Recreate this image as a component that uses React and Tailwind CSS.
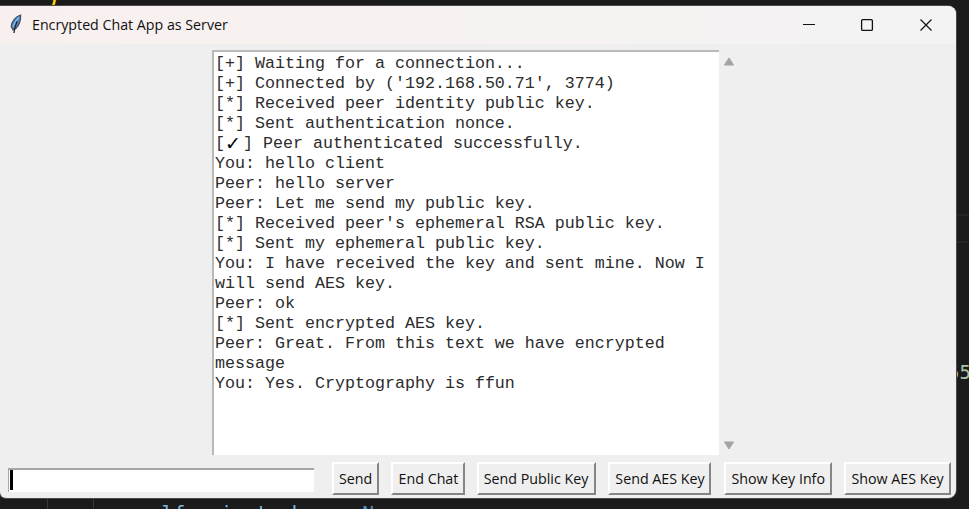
import React from 'react';

const LOG = [
  '[+] Waiting for a connection...',
  "[+] Connected by ('192.168.50.71', 3774)",
  '[*] Received peer identity public key.',
  '[*] Sent authentication nonce.',
  '[✓] Peer authenticated successfully.',
  'You: hello client',
  'Peer: hello server',
  'Peer: Let me send my public key.',
  "[*] Received peer's ephemeral RSA public key.",
  '[*] Sent my ephemeral public key.',
  'You: I have received the key and sent mine. Now I',
  'will send AES key.',
  'Peer: ok',
  '[*] Sent encrypted AES key.',
  'Peer: Great. From this text we have encrypted',
  'message',
  'You: Yes. Cryptography is ffun',
];

const BUTTONS = [
  ['Send', 'w-[47px]'],
  ['End Chat', 'w-[74px] ml-3'],
  ['Send Public Key', 'w-[119px] ml-3'],
  ['Send AES Key', 'w-[103px] ml-3'],
  ['Show Key Info', 'w-[108px] ml-[13px]'],
  ['Show AES Key', 'w-[107px] ml-3'],
];

function LogLine({ text }) {
  const parts = text.split('✓');
  return (
    <div className="flex h-5 whitespace-pre">
      <span>{parts[0]}</span>
      {parts.length > 1 && (
        <span className="w-[18px] font-['DejaVu_Sans'] text-[19px] font-bold leading-[18px] text-black">✓</span>
      )}
      {parts.length > 1 && <span>{parts[1]}</span>}
    </div>
  );
}

export default function App() {
  return (
    <div className="relative h-[509px] w-[969px] overflow-hidden bg-[#1b1b1b]">
      <div className="absolute left-[48px] top-[-12px] font-['Liberation_Mono',monospace] text-[18px] font-bold leading-5 text-[#ffd700]">)</div>
      <div className="absolute left-[956px] top-[214px] h-[29px] w-[13px] border-y-2 border-[#252525]" />
      <div className="absolute left-[948px] top-[362px] font-['DejaVu_Sans_Mono',monospace] text-[19px] leading-5 text-[#a9c5a0]">55</div>
      <div className="absolute left-[47px] top-[498px] h-[11px] w-[47px] border-x border-[#383838]" />
      <div className="absolute left-[138px] top-[504px] whitespace-pre font-['DejaVu_Sans_Mono',monospace] text-[19.600px] leading-5 text-[#79b8e0]">
        self.private_key = <span className="text-[#4a8cc4]">None</span>
      </div>

      <div className="relative mt-[6px] flex h-[492px] w-[956px] flex-col overflow-hidden rounded-r-lg rounded-bl-md bg-[#efefef] shadow-[0_0_0_1px_#4a4a4a]">
        <header className="flex h-[38px] shrink-0 items-center bg-linear-to-r from-[#f8f0ef] via-[#f6f2f1] to-[#f3f3f3]">
          <svg className="mb-[2px] ml-2 h-5 w-4 shrink-0" viewBox="0 0 16 20">
            <path d="M12.600 1C7.600 2.200 3.200 8 3.200 12.600L5 16l2.600-1.200C11 11.500 13 6.500 12.600 1Z" fill="#4a86c8" stroke="#46505c" strokeWidth="1.200" />
            <path d="M11 3.500C8 6 6.500 9 5.200 13" fill="none" stroke="#86b6ea" strokeWidth="1.400" />
            <path d="M9 7.500C7.500 11 6.200 14.500 6 19" fill="none" stroke="#222" strokeWidth="1.300" />
          </svg>
          <h1 className="mb-[2px] ml-2 w-[720px] whitespace-nowrap font-['Open_Sans',sans-serif] text-[15px] leading-5 text-[#111]">
            <span className="inline-block origin-left scale-x-[0.948]">Encrypted Chat App as Server</span>
          </h1>
          <svg className="ml-[51px] h-[14px] w-[130px] shrink-0" viewBox="0 0 130 14" fill="none" stroke="#111" strokeWidth="1.200">
            <path d="M0 6.500h12" />
            <rect x="58.600" y="1.600" width="10.800" height="10.800" rx="1.200" strokeWidth="1.300" />
            <path d="M117.500 1.500l11 11M128.500 1.500l-11 11" />
          </svg>
        </header>

        <main className="flex h-[413px] shrink-0 pl-[212px] pt-[6px]">
          <div className="h-[405px] w-[507px] border-l-2 border-t-2 border-[#b9b9b9] bg-white pl-px pt-[2px] font-['Liberation_Mono','DejaVu_Sans',monospace] text-[16.660px] leading-5 text-[#2c2c2c]">
            {LOG.map((line) => (
              <LogLine key={line} text={line} />
            ))}
          </div>
          <div className="ml-1 flex h-[405px] w-3 flex-col justify-between pb-[5px] pt-[7px]">
            <svg className="h-[9px] w-3" viewBox="0 0 12 9">
              <path d="M6 1L10.500 8H1.500Z" fill="#a3a3a3" stroke="#a3a3a3" strokeLinejoin="round" />
            </svg>
            <svg className="h-[9px] w-3" viewBox="0 0 12 9">
              <path d="M6 8L10.500 1H1.500Z" fill="#a3a3a3" stroke="#a3a3a3" strokeLinejoin="round" />
            </svg>
          </div>
        </main>

        <footer className="flex h-[41px] items-start pl-2 pt-[5px]">
          <div className="mt-[6px] h-6 w-[306px] border-l border-t-2 border-[#a6a6a6] bg-white pl-px">
            <div className="h-[20px] w-[3px] bg-black" />
          </div>
          <div className="ml-[18px] flex">
            {BUTTONS.map(([label, size]) => (
              <button
                key={label}
                className={`${size} flex h-[33px] items-center justify-center whitespace-nowrap border-2 border-b-[#858585] border-l-white border-r-[#858585] border-t-white font-['Open_Sans',sans-serif] text-[15px] text-[#111]`}
              >
                <span className="inline-block scale-x-[0.95]">{label}</span>
              </button>
            ))}
          </div>
        </footer>
      </div>
    </div>
  );
}
